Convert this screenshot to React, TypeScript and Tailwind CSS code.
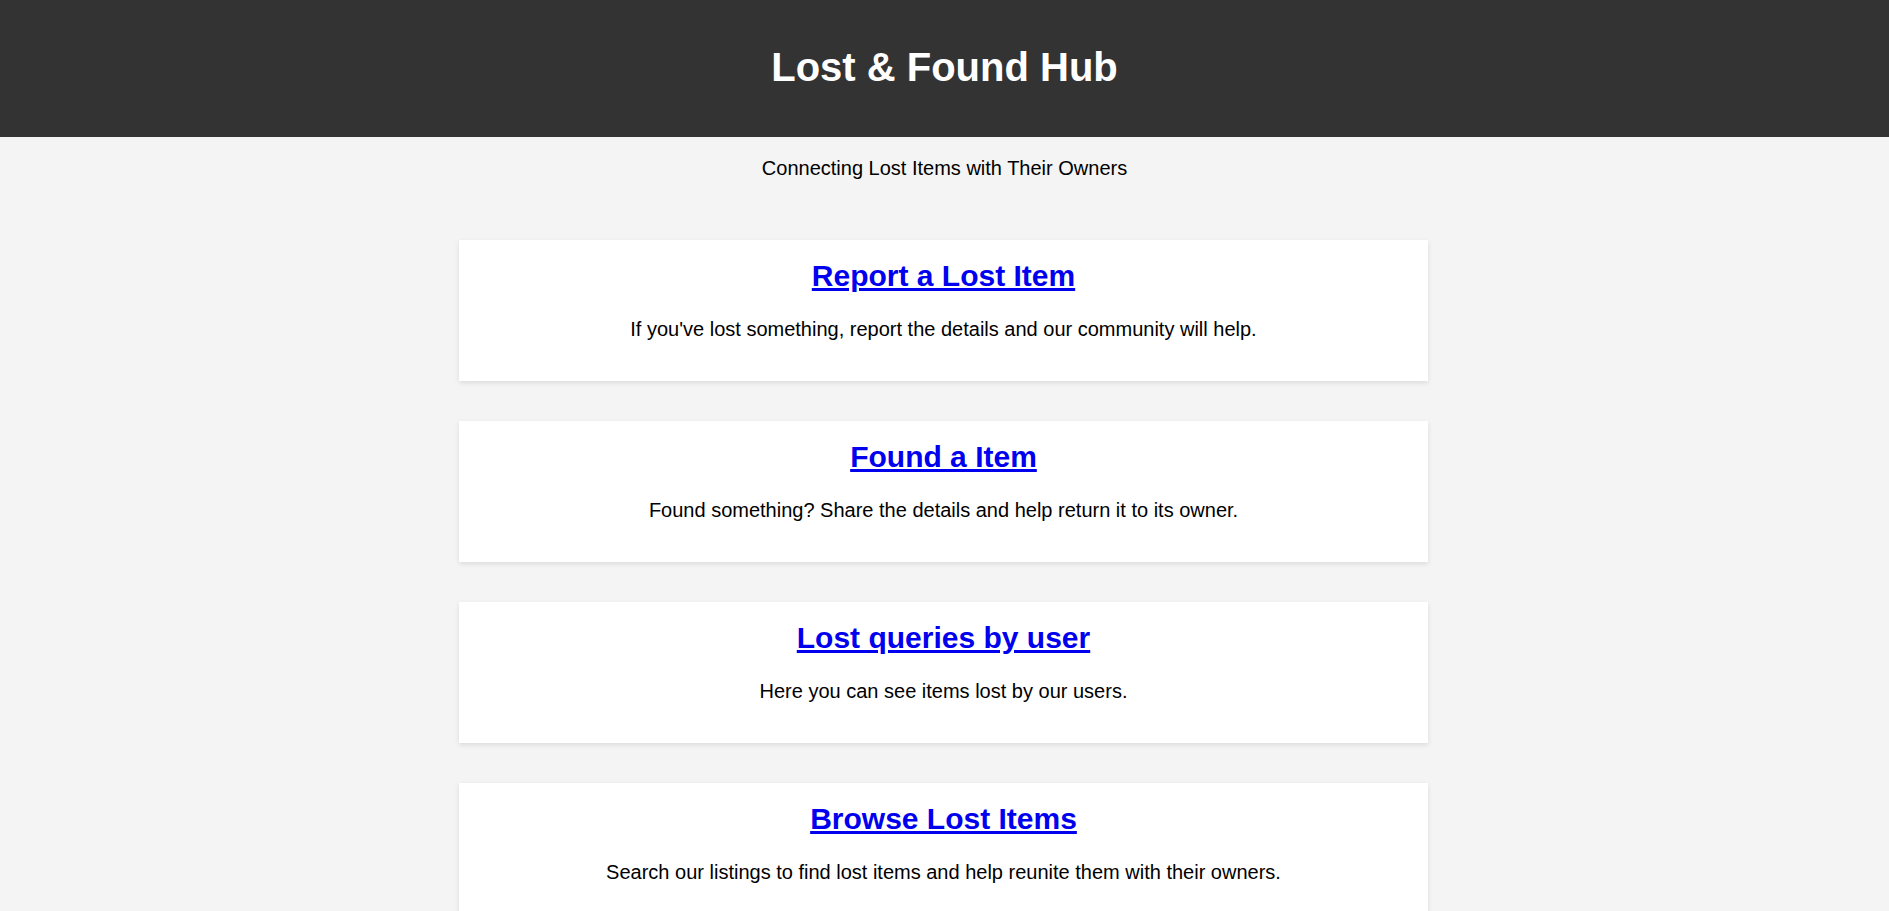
const cards = [
  {
    title: "Report a Lost Item",
    text: "If you've lost something, report the details and our community will help.",
  },
  {
    title: "Found a Item",
    text: "Found something? Share the details and help return it to its owner.",
  },
  {
    title: "Lost queries by user",
    text: "Here you can see items lost by our users.",
  },
  {
    title: "Browse Lost Items",
    text: "Search our listings to find lost items and help reunite them with their owners.",
  },
];

export default function App() {
  return (
    <div className="min-h-screen bg-[#f4f4f4] text-black font-['Liberation_Sans',Arial,sans-serif]">
      <header className="h-[137px] bg-[#333333] pt-[44px] text-center">
        <h1 className="text-[40px] leading-[46px] font-bold text-white">Lost &amp; Found Hub</h1>
      </header>

      <p className="mt-[20px] text-center text-[20px] leading-[23px]">
        Connecting Lost Items with Their Owners
      </p>

      <main className="mt-[60px] flex flex-col gap-[40px] pb-10">
        {cards.map((card, idx) => (
          <section
            key={idx}
            className="w-[969px] mx-auto -translate-x-px bg-white text-center pt-[18px] pb-[40px] shadow-[0_2px_5px_rgba(0,0,0,0.1)]"
          >
            <h2 className="text-[30px] leading-[35px] font-bold">
              <a href="#" className="text-[#0000ee] underline">
                {card.title}
              </a>
            </h2>
            <p className="mt-[25px] text-[20px] leading-[23px]">{card.text}</p>
          </section>
        ))}
      </main>
    </div>
  );
}
